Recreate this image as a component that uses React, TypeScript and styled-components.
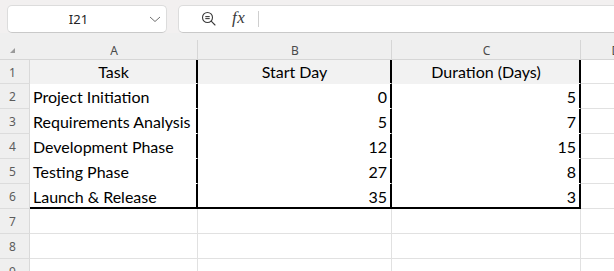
import React from "react";
import styled, { createGlobalStyle, css } from "styled-components";

const Global = createGlobalStyle`
  html, body { margin: 0; padding: 0; background: #ffffff; }
  * { box-sizing: border-box; }
`;

const Page = styled.div`
  width: 614px;
  height: 271px;
  overflow: hidden;
  background: #ffffff;
  font-family: "Lato", "Liberation Sans", sans-serif;
`;

const Toolbar = styled.div`
  height: 33px;
  display: flex;
  align-items: flex-end;
  gap: 11px;
  padding-left: 7px;
  background: #f2f0f0;
`;

const Box = styled.div<{ $grow?: boolean }>`
  height: 28px;
  background: #ffffff;
  border: 1px solid #dcdcdc;
  border-bottom-color: #c9c9c9;
  border-radius: 5px;
  display: flex;
  align-items: center;
  ${(p) =>
    p.$grow
      ? css`
          flex: 1;
          margin-right: -12px;
          padding-left: 22px;
        `
      : css`
          width: 160px;
          flex: none;
          padding-right: 5px;
        `}
`;

const NameText = styled.span`
  flex: 1;
  text-align: center;
  font-family: "Noto Sans", "Open Sans", sans-serif;
  font-size: 13px;
  color: #242424;
`;

const Fx = styled.span`
  font-family: "Liberation Serif", serif;
  font-style: italic;
  font-size: 17px;
  color: #3a3a3a;
  margin-left: 15px;
  margin-top: -2px;
  letter-spacing: 0.5px;
`;

const Divider = styled.div`
  width: 1px;
  height: 16px;
  background: #cfcfcf;
  margin-left: 13px;
`;

const Sheet = styled.div`
  display: grid;
  grid-template-columns: 30px 168px 194px 189px 70px;
  grid-template-rows: 27px 24px repeat(8, 25px);
  width: 651px;
`;

const Corner = styled.div`
  background: #efefef;
  border-bottom: 1px solid #d6d6d6;
  position: relative;
  &::before {
    content: "";
    position: absolute;
    left: 10px;
    top: 15px;
    width: 0;
    height: 0;
    border-left: 5px solid transparent;
    border-bottom: 5px solid #9a9a9a;
  }
`;

const ColHead = styled.div`
  position: relative;
  background: #efefef;
  border-bottom: 1px solid #d6d6d6;
  display: flex;
  align-items: flex-end;
  justify-content: center;
  font-family: "Noto Sans", "Open Sans", sans-serif;
  font-size: 12px;
  line-height: 16px;
  color: #4a4a4a;
  &::after {
    content: "";
    position: absolute;
    right: 0;
    top: 7px;
    bottom: 0;
    width: 1px;
    background: #d6d6d6;
  }
`;

const RowHead = styled.div`
  background: #efefef;
  border-right: 1px solid #d9d9d9;
  border-bottom: 1px solid #dcdcdc;
  display: flex;
  align-items: center;
  justify-content: center;
  padding-right: 4px;
  padding-top: 1px;
  font-family: "Noto Sans", "Open Sans", sans-serif;
  font-size: 12px;
  color: #5c5c5c;
`;

type CellProps = {
  $fill?: boolean;
  $table?: boolean;
  $right?: boolean;
  $bottom?: boolean;
  $align?: "left" | "center" | "right";
};

const Cell = styled.div<CellProps>`
  display: flex;
  align-items: flex-end;
  padding: 0 3px 2px 3px;
  font-size: 16px;
  line-height: 18px;
  color: #000000;
  white-space: nowrap;
  overflow: hidden;
  background: ${(p) => (p.$fill ? "#f2f2f2" : "#ffffff")};
  border-right: 1px solid ${(p) => (p.$right ? "#000000" : p.$table ? "#ffffff" : "#e1e1e1")};
  border-bottom: 1px solid
    ${(p) => (p.$bottom ? "#000000" : p.$fill ? "#f2f2f2" : p.$table ? "#ffffff" : "#e1e1e1")};
  justify-content: ${(p) =>
    p.$align === "right" ? "flex-end" : p.$align === "center" ? "center" : "flex-start"};
  ${(p) => p.$align === "right" && css`padding-right: 4px;`}
  box-shadow: ${(p) =>
    [p.$right ? "inset -1px 0 0 #000000" : "", p.$bottom ? "inset 0 -1px 0 #000000" : ""]
      .filter(Boolean)
      .join(", ") || "none"};
`;

const rows: [string, number, number][] = [
  ["Project Initiation", 0, 5],
  ["Requirements Analysis", 5, 7],
  ["Development Phase", 12, 15],
  ["Testing Phase", 27, 8],
  ["Launch & Release", 35, 3],
];

const ZoomIcon = () => (
  <svg width="16" height="16" viewBox="0 0 16 16" fill="none" stroke="#3a3a3a" strokeWidth="1.1">
    <circle cx="6.5" cy="6.5" r="5" />
    <line x1="4.3" y1="5.6" x2="8.7" y2="5.6" />
    <line x1="4.3" y1="7.6" x2="8.7" y2="7.6" />
    <line x1="10.2" y1="10.2" x2="14" y2="14" strokeLinecap="round" />
  </svg>
);

const Chevron = () => (
  <svg width="12" height="7" viewBox="0 0 12 7" fill="none" stroke="#707070" strokeWidth="1">
    <polyline points="1,1 6,5.5 11,1" />
  </svg>
);

export default function App() {
  return (
    <Page>
      <Global />
      <Toolbar>
        <Box>
          <NameText>I21</NameText>
          <Chevron />
        </Box>
        <Box $grow>
          <ZoomIcon />
          <Fx>fx</Fx>
          <Divider />
        </Box>
      </Toolbar>
      <Sheet>
        <Corner />
        {["A", "B", "C", "D"].map((c) => (
          <ColHead key={c}>{c}</ColHead>
        ))}

        <RowHead>1</RowHead>
        <Cell $fill $table $right $align="center">Task</Cell>
        <Cell $fill $table $right $align="center">Start Day</Cell>
        <Cell $fill $table $right $align="center">Duration (Days)</Cell>
        <Cell />

        {rows.map(([task, start, dur], i) => {
          const last = i === rows.length - 1;
          return (
            <React.Fragment key={task}>
              <RowHead>{i + 2}</RowHead>
              <Cell $table $right $bottom={last}>{task}</Cell>
              <Cell $table $right $bottom={last} $align="right">{start}</Cell>
              <Cell $table $right $bottom={last} $align="right">{dur}</Cell>
              <Cell />
            </React.Fragment>
          );
        })}

        {[7, 8, 9].map((n) => (
          <React.Fragment key={n}>
            <RowHead>{n}</RowHead>
            <Cell />
            <Cell />
            <Cell />
            <Cell />
          </React.Fragment>
        ))}
      </Sheet>
    </Page>
  );
}
